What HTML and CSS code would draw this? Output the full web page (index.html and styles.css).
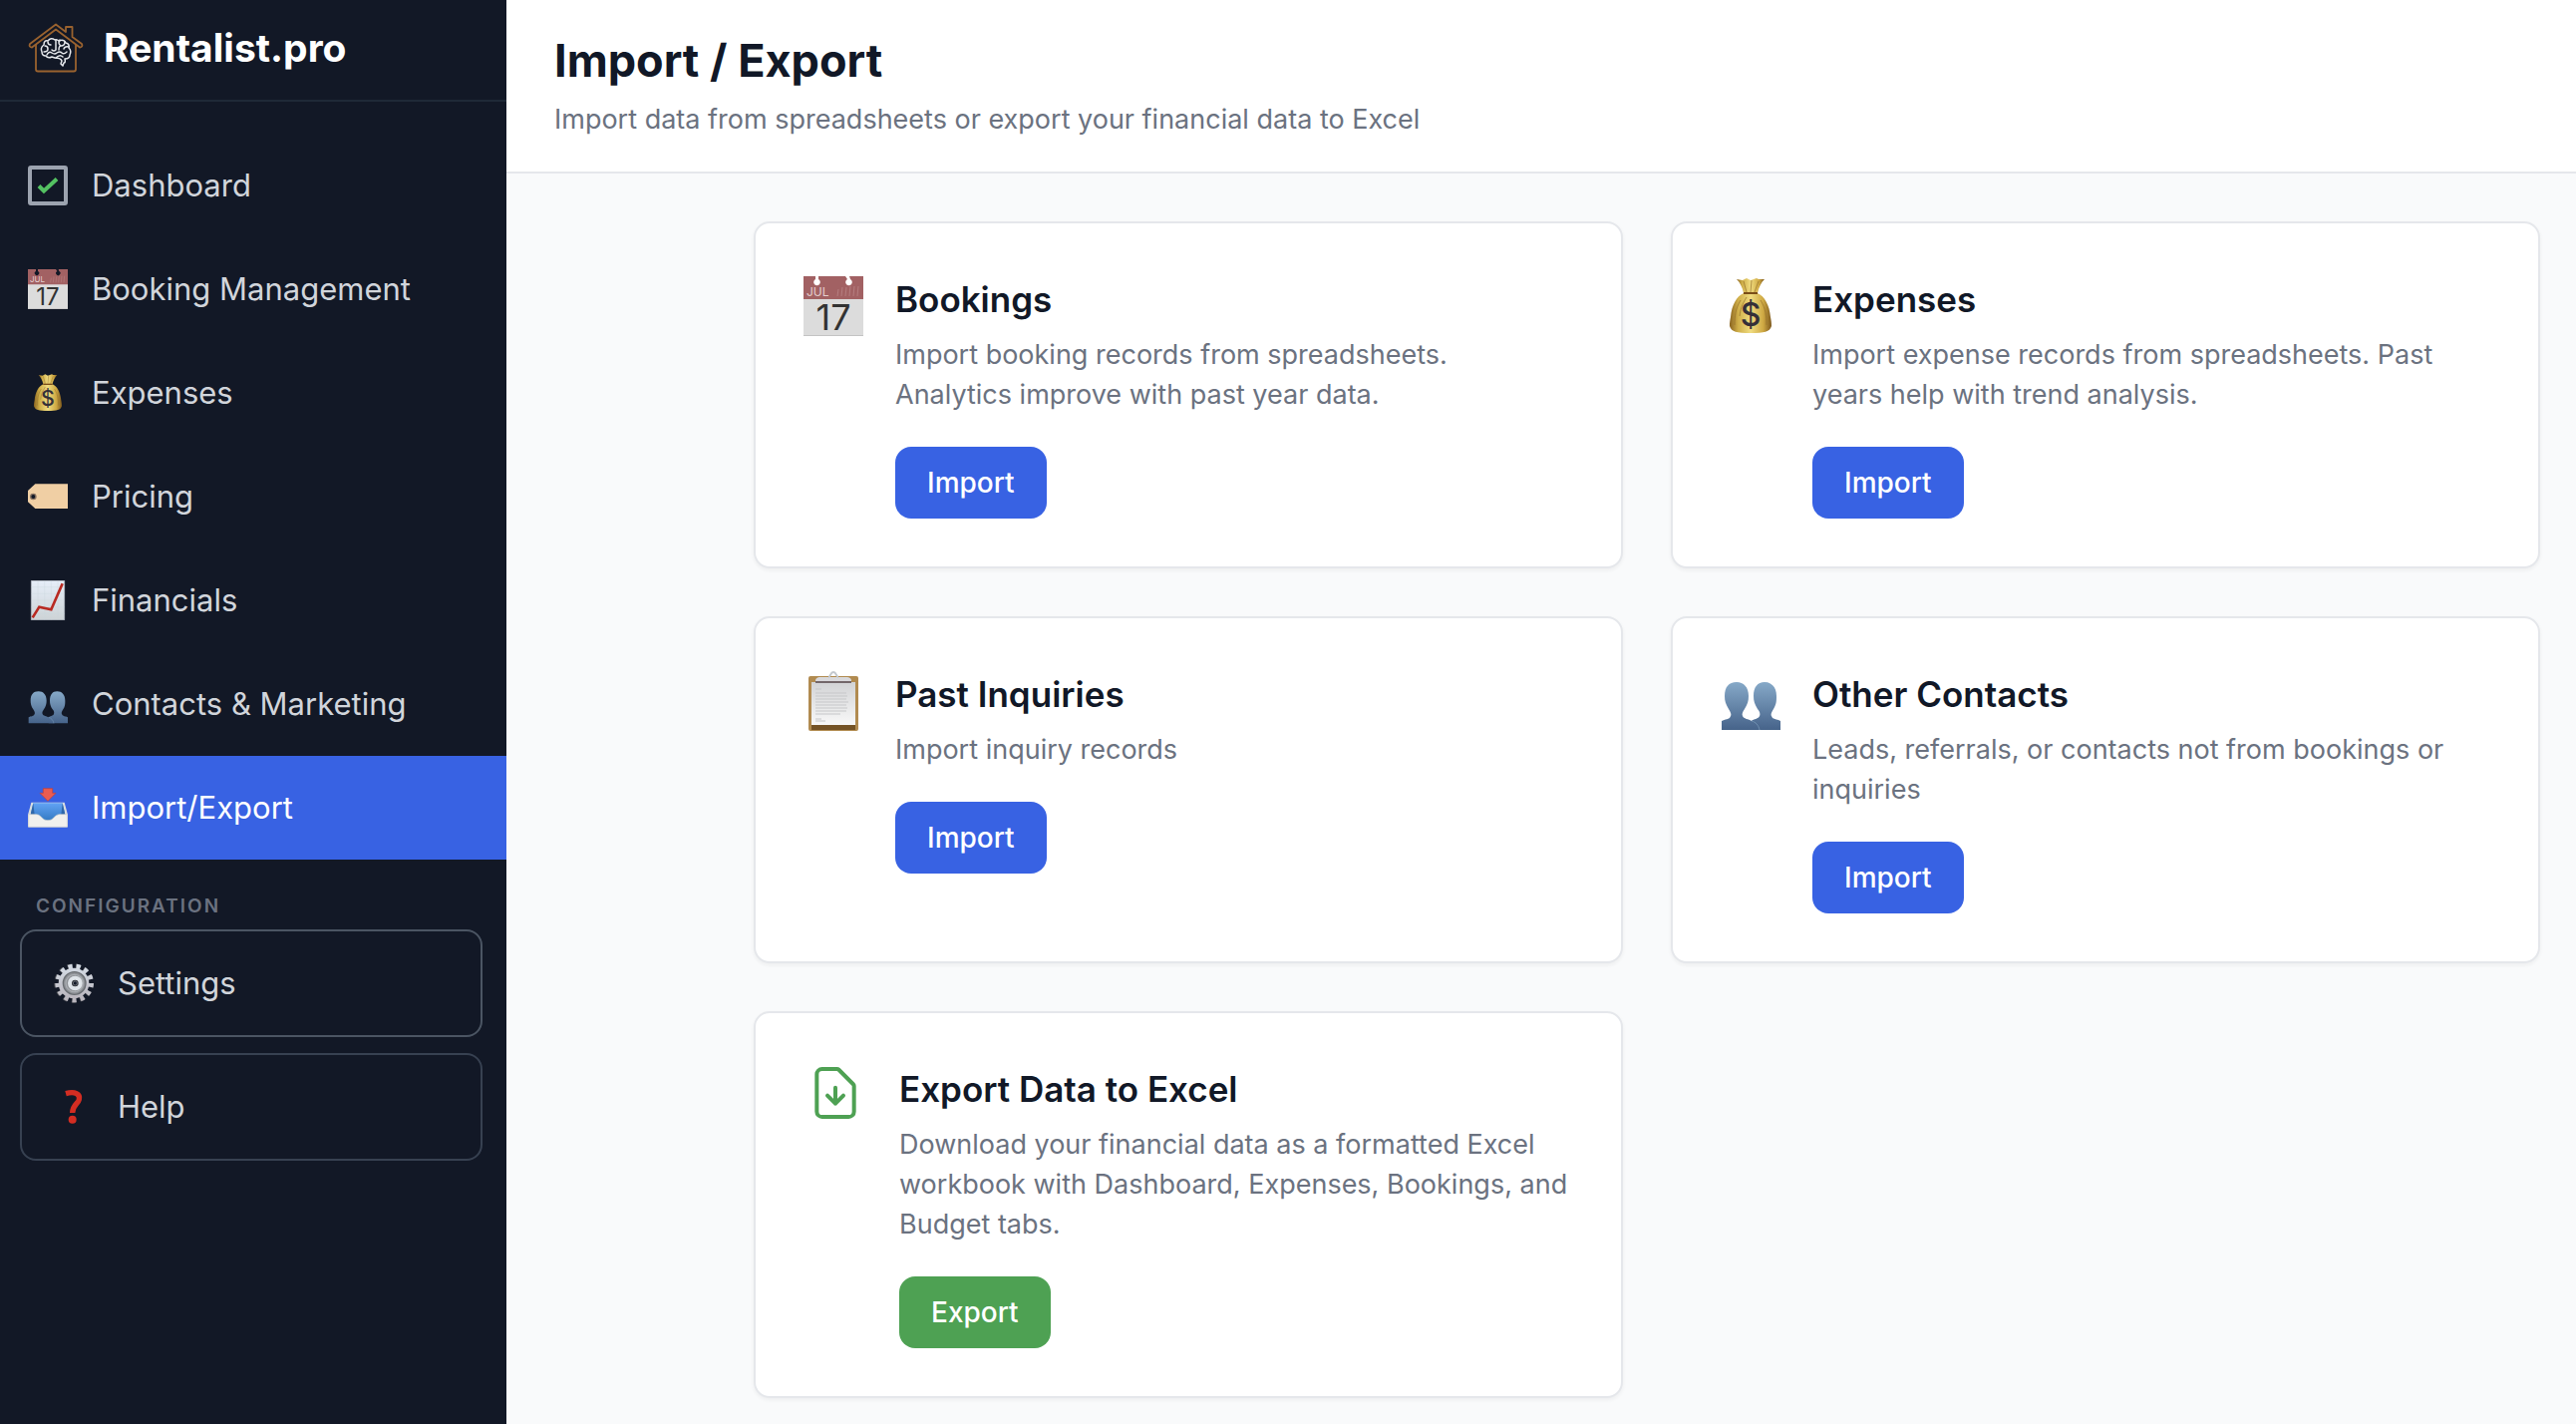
FILE: index.html
```html
<!DOCTYPE html>
<html lang="en">
<head>
  <meta charset="utf-8">
  <meta name="viewport" content="width=device-width, initial-scale=1">
  <title>Import / Export - Rentalist.pro</title>
  <link rel="stylesheet" href="styles.css">
</head>
<body>

  <!-- shared icons -->
  <svg class="sprite" aria-hidden="true">
    <defs>
      <linearGradient id="gold" x1="0" x2="1" y1="0" y2="0">
        <stop offset="0" stop-color="#8a6420"/>
        <stop offset=".2" stop-color="#cfae48"/>
        <stop offset=".5" stop-color="#f0dc80"/>
        <stop offset=".8" stop-color="#cfa943"/>
        <stop offset="1" stop-color="#7d581c"/>
      </linearGradient>
      <linearGradient id="steel" x1="0" x2="0" y1="0" y2="1">
        <stop offset="0" stop-color="#86a9c8"/>
        <stop offset="1" stop-color="#46638a"/>
      </linearGradient>
      <linearGradient id="paper" x1="0" x2="0" y1="0" y2="1">
        <stop offset="0" stop-color="#d2d3d5"/>
        <stop offset="1" stop-color="#f8f8f8"/>
      </linearGradient>
      <linearGradient id="chartpaper" x1="0" x2="0" y1="0" y2="1">
        <stop offset="0" stop-color="#e6eef9"/>
        <stop offset="1" stop-color="#cdd3d6"/>
      </linearGradient>
      <linearGradient id="tray" x1="0" x2="0" y1="0" y2="1">
        <stop offset="0" stop-color="#62a3f5"/>
        <stop offset="1" stop-color="#347bc4"/>
      </linearGradient>
      <linearGradient id="metal" x1="0" x2="0" y1="0" y2="1">
        <stop offset="0" stop-color="#d3dae3"/>
        <stop offset="1" stop-color="#b9b5bd"/>
      </linearGradient>

      <symbol id="calendar" viewBox="0 0 60 60">
        <path fill="#dcdcdc" d="M0 22h60v38H0z"/>
        <path fill="#a26163" fill-rule="evenodd" d="M0 0h12v3a3.300 3.300 0 1 0 3 0V0h27l2 3a3.300 3.300 0 1 0 3 0L46 0h14v23H0z"/>
        <path stroke="#b57d7f" stroke-width="1" d="M34 20l1-7m3 7l1-9m3 9l1-9m3 9l1-10m3 10l1-10m3 10l1-10"/>
        <path fill="#c4c4c4" d="M0 59h60v1H0z"/>
        <text x="3" y="20" font-size="12" fill="#e5cfcf">JUL</text>
        <text x="30" y="54" font-size="36" text-anchor="middle" fill="#333">17</text>
      </symbol>

      <symbol id="moneybag" viewBox="0 0 60 60">
        <path fill="url(#gold)" d="M16 3l6 1 4-2 4 2 6-2 2 1 6 0c-3 3-6 8-7 14h-14c-1-6-4-11-7-14z"/>
        <path fill="url(#gold)" d="M23 17h14c7 3 12 12 13 24 1 5 1 7 1 9-2 6-7 7-21 7s-19-1-21-7c0-2 0-4 1-9 1-12 6-21 13-24z"/>
        <path fill="none" stroke="#96712b" stroke-width="1" opacity=".7" d="M23 5l3 11M31 4l-1 12M38 5l-4 11M20 24c-5 8-6 16-6 25M26 21c-5 8-6 12-7 19M40 24c5 8 6 16 6 25"/>
        <path fill="none" stroke="#7a4e18" stroke-width="2" d="M23 17h14"/>
        <text x="30" y="50" font-size="32" font-weight="500" text-anchor="middle" fill="#353038">$</text>
      </symbol>

      <symbol id="tag" viewBox="0 0 60 60">
        <path fill="#f0cfa4" d="M11 11h49v37H11L0 38V21z"/>
        <circle cx="8" cy="30" r="4" fill="#111827" stroke="#8b7563" stroke-width="2"/>
      </symbol>

      <symbol id="chart" viewBox="0 0 60 60">
        <path fill="url(#chartpaper)" stroke="#b9c0c8" d="M5 .5h50v59H5z"/>
        <path stroke="#c9d3de" stroke-width=".5" d="M15 1v58M25 1v58M35 1v58M45 1v58M5 10h50M5 20h50M5 30h50M5 40h50M5 50h50"/>
        <path fill="none" stroke="#b82a22" stroke-width="4" d="M7 56l10-16 18 4L52 5"/>
      </symbol>

      <symbol id="people" viewBox="0 0 60 60">
        <path fill="url(#steel)" d="M31 59V50c2-2 7-2 8-5 1-2 0-5-2-7-3-5-4-8-4-13 0-9 4-14 11-14s12 5 12 14c0 5 0 8-3 13-2 3-3 6-2 7 1 4 6 3 9 5v9z"/>
        <path fill="url(#steel)" d="M1 59V50c3-2 8-1 9-5 1-1 0-4-2-7-3-5-4-8-4-13 0-9 4-14 12-14 7 0 12 5 12 14 0 5-1 8-4 13-2 3-3 5-2 7 1 3 6 3 9 5 4 1 7 4 8 9z"/>
        <path fill="none" stroke="#6f8fb0" stroke-width="1" d="M31 50c4 1 7 4 8 9"/>
      </symbol>

      <symbol id="inbox" viewBox="0 0 60 60">
        <path fill="#d9dde0" d="M5 22h50l5 19v18H0V41z"/>
        <path fill="url(#tray)" d="M8 23h44l4 17-10 1-8 8H24l-8-8-12-1z"/>
        <path fill="#2f68aa" d="M8 23l-4 17 6 1zM52 23l4 17-6 1z"/>
        <path fill="#f1f1ee" stroke="#d0d0cd" stroke-width="1" d="M1 40h12c8 1 8 9 17 9s9-8 17-9h12v19H1z"/>
        <path fill="#ea5c50" stroke="#c83c32" stroke-width="1" d="M23 1h14v7h5L30 20 18 8h5z"/>
      </symbol>

      <symbol id="clipboard" viewBox="0 0 60 60">
        <rect x="5" y="5" width="50" height="55" rx="2" fill="#b18b50"/>
        <path fill="#745326" d="M8 54h44v5H8z"/>
        <path fill="url(#paper)" d="M8 11h44v43H8z"/>
        <path fill="#d9d9dc" d="M12 10c0-3 2-4 5-4h26c3 0 5 1 5 4z"/>
        <path fill="#73676a" d="M12 10h36v2H12z"/>
        <path fill="none" stroke="#c2c7cd" stroke-width="2" d="M25 6c2 0 2-5 5-5s3 5 5 5"/>
        <path fill="none" stroke="#c6c7c9" stroke-width="1" d="M12 18h6M12 22h31M12 25h32M12 28h31M12 31h33M12 34h31M12 37h32M12 40h31M12 43h25M12 48h6M12 50h10"/>
      </symbol>

      <symbol id="gear" viewBox="0 0 60 60">
        <circle cx="30" cy="30" r="25.500" fill="none" stroke="#5a5c61" stroke-width="8" pathLength="26" stroke-dasharray="1 1"/>
        <circle cx="31" cy="30" r="25" fill="none" stroke="url(#metal)" stroke-width="8" pathLength="26" stroke-dasharray="1 1"/>
        <circle cx="30" cy="30" r="23" fill="url(#metal)"/>
        <circle cx="31" cy="30" r="17" fill="#8e9196" stroke="#696d72" stroke-width="2"/>
        <circle cx="31" cy="30" r="13" fill="none" stroke="#a9adb2" stroke-width="2"/>
        <circle cx="32" cy="30" r="8" fill="#2d3036" stroke="#dfe4e9" stroke-width="6"/>
        <circle cx="32" cy="30" r="3" fill="#111827" stroke="#8a8e94" stroke-width="1"/>
      </symbol>

      <symbol id="question" viewBox="0 0 60 60">
        <path fill="none" stroke="#d32d22" stroke-width="8" d="M18 10c14-4 22 1 20 9-1 6-10 8-10 20"/>
        <circle cx="28" cy="49" r="6" fill="#d32d22"/>
      </symbol>
    </defs>
  </svg>

  <div class="app">
    <aside class="sidebar">
      <div class="brand">
        <svg class="brand-logo" viewBox="0 0 56 56" fill="none" stroke-linecap="round" stroke-linejoin="round" aria-hidden="true">
          <g stroke="#99622f" stroke-width="1.800">
            <path d="M28 4.500L38 12V7h6.500v10L54 24q1.500 3-2 3.500L28 9.500 4 27.500q-3.500-.5-2-3.500z"/>
            <path d="M8 25v24.500q0 2 2 2h36q2 0 2-2V25"/>
          </g>
          <g stroke="#e5e7eb" stroke-width="1.500">
            <path d="M27 20q-4-3-7 1-4-1-4 4-4 3-2 7 0 4 4 4 2 3 6 1l3 1q6 0 7 3l-1 3 2 2 1-3q2 0 1-4 5 0 5-4 2-4-1-7 1-4-3-5-2-4-7-2-2-2-4-1z"/>
            <path d="M28 20v10q-2 2-4 0M20 22q0 3 3 3M17 26q3 0 3 3t-4 3M32 20q-2 3 0 5M37 22q0 4-4 4-2 0-2 4M41 27q-4-1-5 2M19 35q2-4 5-2t5 0q3-2 5 0t5-1M28 38q4-4 7-1"/>
          </g>
        </svg>
        <span class="brand-name">Rentalist.pro</span>
      </div>

      <nav class="menu">
        <a class="menu-item" href="#dashboard">
          <svg class="menu-icon" viewBox="0 0 40 40" fill="none" aria-hidden="true">
            <rect x="2" y="2" width="36" height="36" rx="1" stroke="#9ca3af" stroke-width="4"/>
            <path d="M11 20.500l5 5L29 13.500" stroke="#54c262" stroke-width="4"/>
          </svg>
          Dashboard
        </a>
        <a class="menu-item" href="#bookings"><svg class="menu-icon" aria-hidden="true"><use href="#calendar"/></svg>Booking Management</a>
        <a class="menu-item" href="#expenses"><svg class="menu-icon" aria-hidden="true"><use href="#moneybag"/></svg>Expenses</a>
        <a class="menu-item" href="#pricing"><svg class="menu-icon" aria-hidden="true"><use href="#tag"/></svg>Pricing</a>
        <a class="menu-item" href="#financials"><svg class="menu-icon" aria-hidden="true"><use href="#chart"/></svg>Financials</a>
        <a class="menu-item" href="#contacts"><svg class="menu-icon" aria-hidden="true"><use href="#people"/></svg>Contacts &amp; Marketing</a>
        <a class="menu-item active" href="#import-export" aria-current="page"><svg class="menu-icon" aria-hidden="true"><use href="#inbox"/></svg>Import/Export</a>
      </nav>

      <div class="config">
        <h2 class="config-title">CONFIGURATION</h2>
        <a class="config-item settings" href="#settings"><svg class="menu-icon" aria-hidden="true"><use href="#gear"/></svg>Settings</a>
        <a class="config-item" href="#help"><svg class="menu-icon" aria-hidden="true"><use href="#question"/></svg>Help</a>
      </div>
    </aside>

    <div class="page">
      <header class="page-header">
        <h1>Import / Export</h1>
        <p>Import data from spreadsheets or export your financial data to Excel</p>
      </header>

      <main class="content">
        <div class="cards">
          <section class="card">
            <svg class="card-icon" aria-hidden="true"><use href="#calendar"/></svg>
            <div class="card-body">
              <h2>Bookings</h2>
              <p>Import booking records from spreadsheets.<br>Analytics improve with past year data.</p>
              <button class="btn" type="button">Import</button>
            </div>
          </section>

          <section class="card">
            <svg class="card-icon" aria-hidden="true"><use href="#moneybag"/></svg>
            <div class="card-body">
              <h2>Expenses</h2>
              <p>Import expense records from spreadsheets. Past years help with trend analysis.</p>
              <button class="btn" type="button">Import</button>
            </div>
          </section>

          <section class="card">
            <svg class="card-icon" aria-hidden="true"><use href="#clipboard"/></svg>
            <div class="card-body">
              <h2>Past Inquiries</h2>
              <p>Import inquiry records</p>
              <button class="btn" type="button">Import</button>
            </div>
          </section>

          <section class="card">
            <svg class="card-icon" aria-hidden="true"><use href="#people"/></svg>
            <div class="card-body">
              <h2>Other Contacts</h2>
              <p>Leads, referrals, or contacts not from bookings or inquiries</p>
              <button class="btn" type="button">Import</button>
            </div>
          </section>

          <section class="card">
            <svg class="card-icon-file" viewBox="0 0 24 24" fill="none" stroke="currentColor" stroke-width="1.500" stroke-linecap="round" stroke-linejoin="round" aria-hidden="true">
              <path d="M12 10v6m0 0l-3-3m3 3l3-3m2 8H7a2 2 0 01-2-2V5a2 2 0 012-2h5.586a1 1 0 01.707.293l5.414 5.414a1 1 0 01.293.707V19a2 2 0 01-2 2z"/>
            </svg>
            <div class="card-body">
              <h2>Export Data to Excel</h2>
              <p>Download your financial data as a formatted Excel workbook with Dashboard, Expenses, Bookings, and Budget tabs.</p>
              <button class="btn btn-green" type="button">Export</button>
            </div>
          </section>
        </div>
      </main>
    </div>
  </div>

</body>
</html>
```
FILE: styles.css
```css
* {
  box-sizing: border-box;
}

body {
  margin: 0;
  font-family: Inter, "Liberation Sans", sans-serif;
  font-size: 27px;
  line-height: 40px;
  color: #111827;
  background: #f9fafb;
}

h1, h2, p {
  margin: 0;
}

a {
  color: inherit;
  text-decoration: none;
}

.sprite {
  position: absolute;
  width: 0;
  height: 0;
}

.app {
  display: flex;
  min-height: 100vh;
}

/* sidebar */
.sidebar {
  flex: 0 0 508px;
  background: #121826;
  color: #d1d5db;
  font-size: 31px;
  line-height: 50px;
}

.brand {
  display: flex;
  align-items: center;
  gap: 20px;
  height: 102px;
  padding: 0 28px 4px;
  border-bottom: 2px solid #1f2937;
}

.brand-logo {
  width: 56px;
  height: 56px;
}

.brand-name {
  font-size: 39px;
  font-weight: 700;
  color: #fff;
}

.menu {
  display: flex;
  flex-direction: column;
  padding-top: 32px;
}

.menu-item,
.config-item {
  display: flex;
  align-items: center;
  gap: 24px;
  padding: 27px 28px;
}

.menu-item.active {
  background: #3862e3;
  color: #fff;
}

.menu-icon {
  flex: none;
  width: 40px;
  height: 40px;
}

.config {
  display: flex;
  flex-direction: column;
  gap: 16px;
  padding: 32px 24px 32px 20px;
}

.config-title {
  height: 22px;
  padding-left: 16px;
  font-size: 19px;
  line-height: 30px;
  font-weight: 600;
  letter-spacing: 2px;
  color: #6b7280;
}

.config-item {
  padding: 27px 32px;
  border: 2px solid #374151;
  border-radius: 16px;
}

.config-item.settings {
  border-color: #4b5563;
}

/* page */
.page {
  flex: 1;
  min-width: 0;
}

.page-header {
  padding: 32px 48px 30px;
  background: #fff;
  border-bottom: 2px solid #e5e7eb;
}

.page-header h1 {
  font-size: 45px;
  line-height: 58px;
  font-weight: 700;
}

.page-header p {
  margin-top: 8px;
  line-height: 44px;
  color: #6b7280;
}

.content {
  padding: 48px 36px 24px 48px;
}

.cards {
  display: grid;
  grid-template-columns: 1fr 1fr;
  gap: 48px;
  max-width: 1792px;
  margin-left: auto;
}

.card {
  display: flex;
  align-items: flex-start;
  gap: 32px;
  padding: 48px;
  background: #fff;
  border: 2px solid #e5e7eb;
  border-radius: 16px;
  box-shadow: 0 2px 4px rgba(0, 0, 0, 0.05);
}

.card-icon {
  flex: none;
  width: 60px;
  height: 60px;
  margin-top: 5px;
}

.card-icon-file {
  flex: none;
  width: 64px;
  height: 64px;
  color: #4ea153;
}

.card-body {
  flex: 1;
}

.card-body h2 {
  font-size: 35px;
  line-height: 56px;
  font-weight: 600;
}

.card-body p {
  margin: 8px 0 32px;
  color: #6b7280;
}

.btn {
  display: block;
  padding: 16px 32px;
  border: 0;
  border-radius: 16px;
  background: #3862e3;
  color: #fff;
  font: 500 28px/40px Inter, "Liberation Sans", sans-serif;
  cursor: pointer;
}

.btn-green {
  background: #4ea153;
}
```
